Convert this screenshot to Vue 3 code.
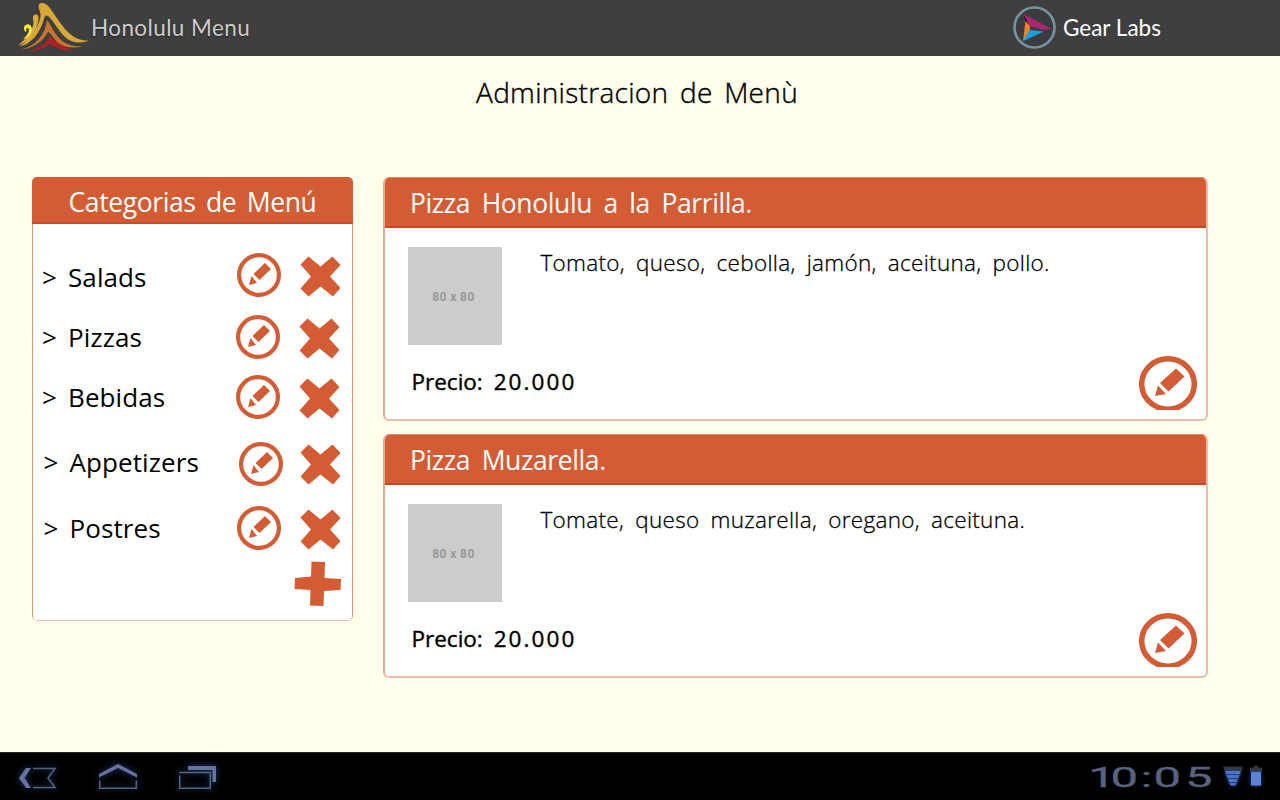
<script setup>
const categories = [
  { name: 'Salads', low: false, edit: [27, 28], remove: [88.5, 29.5] },
  { name: 'Pizzas', low: false, edit: [26, 30], remove: [87.5, 31.5] },
  { name: 'Bebidas', low: false, edit: [26, 30], remove: [87.5, 31.5] },
  { name: 'Appetizers', low: true, edit: [29, 32], remove: [88.5, 32.5] },
  { name: 'Postres', low: true, edit: [27, 30], remove: [88.5, 31.5] }
]
const dishes = [
  { title: 'Pizza Honolulu a la Parrilla.', text: 'Tomato, queso, cebolla, jamón, aceituna, pollo.', price: '20.000' },
  { title: 'Pizza Muzarella.', text: 'Tomate, queso muzarella, oregano, aceituna.', price: '20.000' }
]
</script>

<template>
  <div class="screen">
    <header class="topbar">
      <svg class="logo" width="74" height="56" viewBox="0 0 74 56">
        <path fill="#d9a938" d="M22 4C24 2 29 2.500 32 7C42 20 48 33 60 38.500C64 40.300 68 40.500 72 40.500C65 43.500 55 43.500 48 37C39 28 34 15.500 29 15.500C27 16 27 21 24 27C20 36 13 44 3 46.500C12 40 21 29 23.500 17C24.300 12 20.500 8 22 4Z"/>
        <path fill="#d9b03a" d="M18.500 14.500C22 14.500 22 18 21 22C19 32 12 42 1 45.500C9 39 15 31 16.500 24C17 20 14 15.500 18.500 14.500Z"/>
        <path fill="#f7ea3a" d="M8.500 32C5 28 8 23.500 12 24.500C18 27 14 38 6 39C10 36 13 31 11.500 28.500C10 27 8.500 29 9.500 31Z"/>
        <path fill="#c9752d" d="M30 20C34 25 37 33 43 39C49 45 57 47 66 46C56 49 46 47.500 40 42C36 38 33 32 31 32C28 37 21 48 4 49.500C19 46 28 35 30 20Z"/>
        <path fill="#b02025" d="M33 36.500C38 42 46 48 57 50C46 51.500 39 48 33 43.500C28 48 21 51 12 50.500C23 48.500 29 43 33 36.500Z"/>
      </svg>
      <span class="brand">Honolulu Menu</span>
      <svg class="gear" width="44" height="44" viewBox="0 0 44 44">
        <circle cx="21.500" cy="21.500" r="20" fill="#3b3c40" stroke="#78959f" stroke-width="2.600"/>
        <path fill="#090909" d="M10.500 8L17 18L15.500 24Z"/>
        <path fill="#a6286f" d="M10.500 8L39 23L30 24L16.500 20Z"/>
        <path fill="#f58220" d="M12.500 15L17 20L16 30L10 35Z"/>
        <path fill="#1b9fdc" d="M16.500 24L31 25.500L9.500 35.500Z"/>
      </svg>
      <span class="maker">Gear Labs</span>
    </header>

    <main class="page">
      <h1 class="title">Administracion de Menù</h1>
      <div class="columns">
        <aside class="sidebar">
          <h2 class="sidebar-head">Categorias de Menú</h2>
          <div class="sidebar-body">
            <ul class="list">
              <li v-for="c in categories" :key="c.name" class="row" :class="{ low: c.low }">
                <span class="arrow">&gt;</span>
                <span class="name">{{ c.name }}</span>
                <svg class="actions" width="116" height="60" viewBox="0 0 116 60">
                  <g :transform="`translate(${c.edit[0]} ${c.edit[1]})`">
                    <circle r="19.900" fill="none" stroke="#d35c35" stroke-width="4.200"/>
                    <path fill="#d35c35" d="M6 -12L12 -6L.5 5L-5.500 -1ZM-7.500 1L-2 8L-10 10Z"/>
                  </g>
                  <path
                    :transform="`translate(${c.remove[0]} ${c.remove[1]})`"
                    fill="#d35c35"
                    d="M-12 -20L0 -10L12 -20L20 -11.500L9.500 0L20 11.500L12.500 20L0 10L-12 20L-20 12L-9.500 0L-20 -12Z"
                  />
                </svg>
              </li>
            </ul>
            <svg class="add" width="48" height="46" viewBox="0 0 48 46">
              <path fill="#d35c35" d="M17.500 .5L31 1L30.500 17L47 18L46.500 29L30 30L29.500 45L16 44.500L16.500 29L.5 28L1 17L17 15.500Z"/>
            </svg>
          </div>
        </aside>

        <section class="dishes">
          <article v-for="d in dishes" :key="d.title" class="card">
            <h2 class="card-head">{{ d.title }}</h2>
            <div class="card-body">
              <div class="thumb"><span>80 x 80</span></div>
              <p class="desc">{{ d.text }}</p>
            </div>
            <div class="card-foot">
              <span class="price">Precio: <span class="amount">{{ d.price }}</span></span>
              <svg width="58" height="54" viewBox="0 0 58 54">
                <ellipse cx="29" cy="28" rx="26.300" ry="25.200" fill="none" stroke="#d35c35" stroke-width="5.500"/>
                <path fill="#d35c35" d="M37 12.500L45.500 20.500L29.500 35.500L21 27ZM19 29.500L27 38L16 40Z"/>
              </svg>
            </div>
          </article>
        </section>
      </div>
    </main>

    <footer class="system">
      <svg class="nav" width="240" height="48" viewBox="0 0 240 48">
        <g class="halo">
          <path fill="#66749b" d="M26 16H31L24.500 26L31 36H26L19 26Z"/>
          <path fill="none" stroke="#56637f" stroke-width="1.500" d="M33 16.500H55L48 26L55 35.500H33"/>
          <path fill="#66749b" d="M99 22L118 12L137 22V25.500L118 16L99 25.500Z"/>
          <path fill="none" stroke="#56637f" stroke-width="1.500" d="M99.700 28.500V36.300H136.300V28.500"/>
          <path fill="#66749b" d="M188 14H216V30H212.500V18H188Z"/>
          <path fill="none" stroke="#56637f" stroke-width="1.500" d="M179.700 23.500V36.300H210.300V20.500H179"/>
        </g>
      </svg>
      <svg class="clock" width="136" height="48" viewBox="0 0 136 48">
        <text transform="scale(1.750 1)" x="2.300 15.100 32.300 39.700 57.700" y="35">10:05</text>
      </svg>
      <svg class="status" width="50" height="48" viewBox="0 0 50 48">
        <path fill="#35343b" d="M5 14.500H25L23.500 19H6.500Z"/>
        <path class="glow" fill="#4d72c6" d="M7 19H23L17.500 33.500H12.500Z"/>
        <path stroke="#253d78" d="M7 22.500H23M9 26.500H21M10 30.500H20"/>
        <path fill="#35343b" d="M36 13.500H40V15.500H44V20H32V15.500H36Z"/>
        <path class="glow" fill="#5c83d3" d="M33 20H43V33.500H33Z"/>
      </svg>
    </footer>
  </div>
</template>

<style>
body { margin: 0; background: #ffffec; }
</style>

<style scoped>
.screen { width: 1280px; height: 800px; display: flex; flex-direction: column; overflow: hidden; background: #ffffec; font-family: "Open Sans", "Noto Sans", sans-serif; color: #000; }
h1, h2, p, ul { margin: 0; padding: 0; font-weight: 400; }
svg { display: block; flex: none; }
span, h1, h2, p { white-space: nowrap; }

.topbar { flex: none; height: 56px; display: flex; align-items: center; background: #3f3f3f; font-family: "Lato", "Open Sans", sans-serif; font-size: 22.500px; }
.logo { margin-left: 17px; width: 74px; }
.brand { width: 922px; margin-bottom: 2px; color: #ccc; letter-spacing: .4px; text-shadow: 0 1px 2px #222; }
.maker { margin: 0 0 2px 6px; color: #fff; }

.page { height: 696px; flex: none; }
.title { height: 74px; padding-right: 6px; text-align: center; font-size: 28px; line-height: 72px; font-weight: 300; letter-spacing: .3px; word-spacing: 4px; -webkit-text-stroke: .4px #000; }
.columns { display: flex; align-items: flex-start; gap: 30px; margin: 47px 0 0 32px; }

.sidebar { width: 321px; border-radius: 5px; overflow: hidden; }
.sidebar-head { box-sizing: border-box; height: 47px; border-bottom: 2px solid #cc4c25; background: #d35c35; color: #fff; text-align: center; font-size: 26.500px; line-height: 51px; letter-spacing: -.4px; word-spacing: 4px; }
.sidebar-body { box-sizing: border-box; height: 396.500px; border: 1px solid #e29479; border-top: 0; border-bottom-color: #efc0ae; border-radius: 0 0 5px 5px; background: #fff; display: flow-root; }
.list { display: grid; grid-template-rows: 60px 60px 65px 66px 60px; margin-top: 23px; list-style: none; }
.row { display: flex; height: 60px; font-size: 26px; line-height: 61px; letter-spacing: .1px; }
.arrow { width: 26px; padding-left: 9px; }
.name { flex: 1; }
.low .arrow { padding-left: 10.500px; }
.low .name { margin-right: -1.500px; }
.actions { margin-right: 4px; }
.add { margin: 3px 0 0 261px; }

.dishes { display: flex; flex-direction: column; gap: 13px; }
.card { box-sizing: border-box; width: 825px; height: 244px; border: 2px solid #eebcab; border-top: 1px solid #e08a6c; border-left-color: #eba993; border-radius: 6px; background: #fff; overflow: hidden; }
.card-head { box-sizing: border-box; height: 50px; margin: 0 -1px; padding-left: 26px; border-bottom: 2px solid #cc4720; background: #d35c35; color: #fff; font-size: 26.500px; line-height: 50px; letter-spacing: -.4px; word-spacing: 5px; }
.card-body { display: flex; padding: 19px 0 0 23px; }
.thumb { width: 94px; height: 98px; background: #ccc; color: #999; text-align: center; font: bold 12px/101px "Roboto", sans-serif; letter-spacing: .4px; text-indent: -3px; }
.desc { margin-left: 38.500px; font-size: 22.500px; line-height: 32px; font-weight: 300; letter-spacing: .3px; word-spacing: 5px; -webkit-text-stroke: .3px #000; }
.card-foot { display: flex; justify-content: space-between; margin: 11px 9px 0 26.500px; }
.price { font-size: 22.500px; line-height: 51px; word-spacing: 5px; -webkit-text-stroke: .4px #000; }
.amount { letter-spacing: 2.100px; }

.system { box-sizing: border-box; height: 48px; flex: none; display: flex; background: #000; border-top: 1px solid #222; }
.system svg { margin-top: -1px; }
.halo { filter: drop-shadow(0 0 3px #244080); }
.glow { filter: drop-shadow(0 0 2px #2450b0); }
.clock { margin-left: 844px; margin-right: -2px; font-family: "Roboto", sans-serif; font-size: 28px; fill: #56627f; stroke: #56627f; stroke-width: .3px; }
.status { margin-left: 0; }
</style>
